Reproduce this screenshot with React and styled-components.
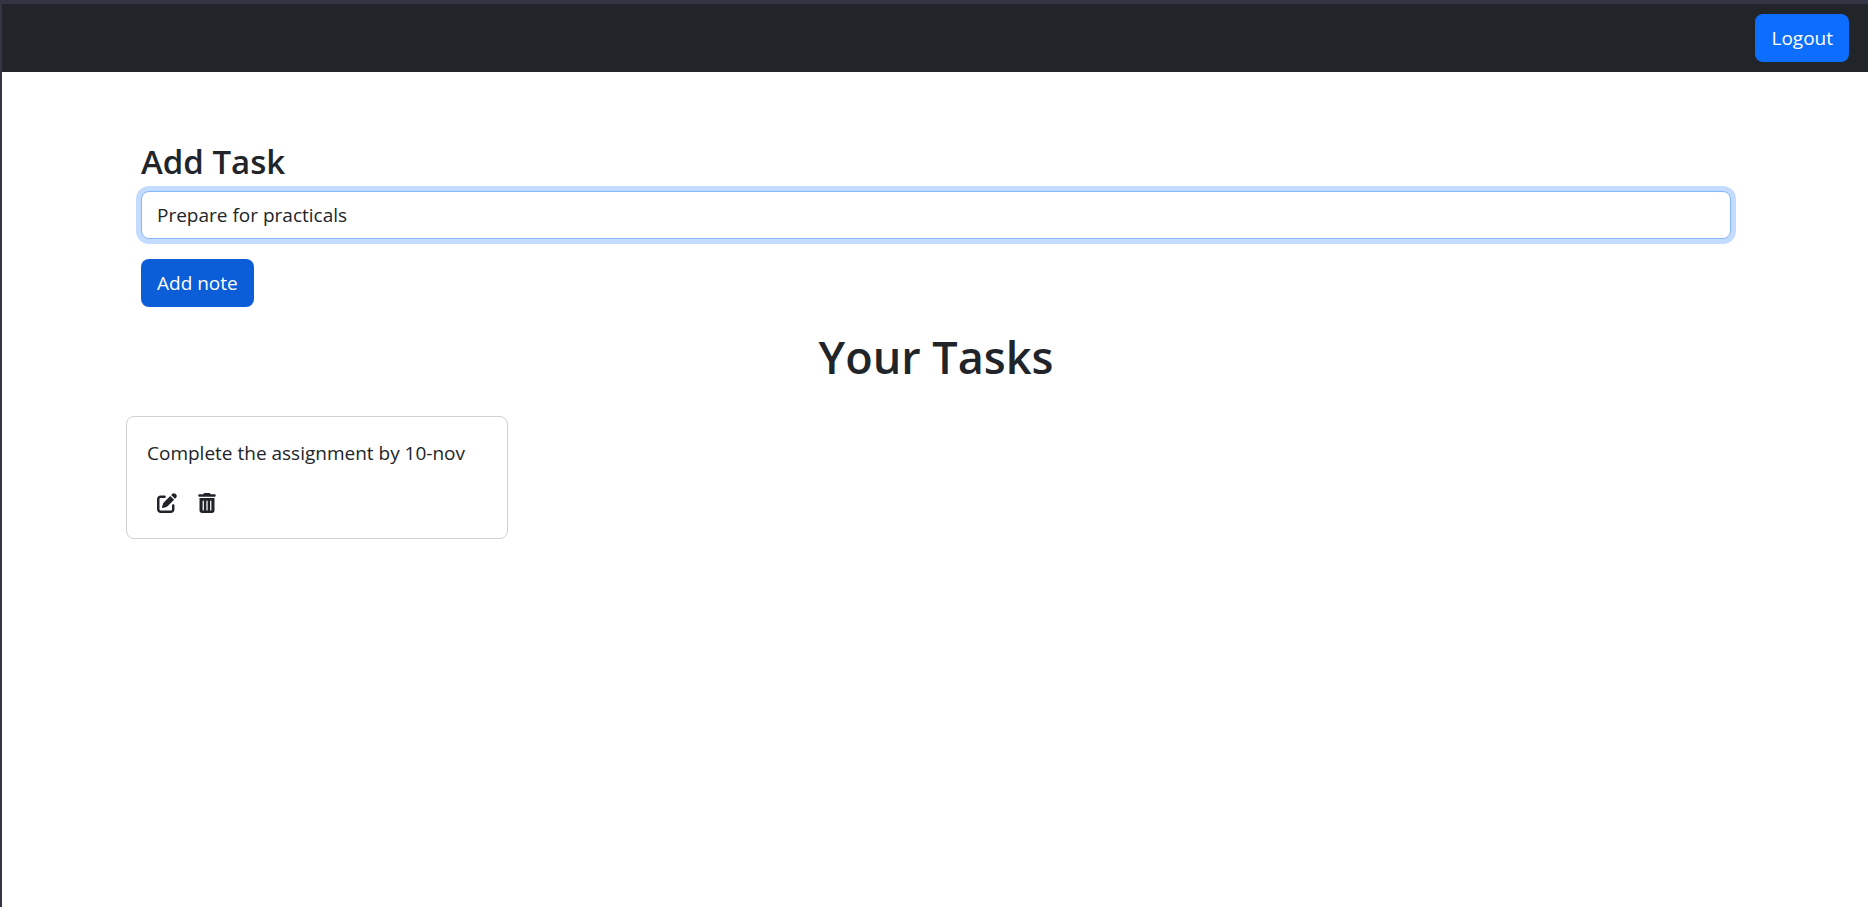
import React, { useState } from "react";
import styled, { createGlobalStyle } from "styled-components";
import { FaPenToSquare, FaTrashCan } from "react-icons/fa6";

const GlobalStyle = createGlobalStyle`
  *, *::before, *::after { box-sizing: border-box; }
  body {
    margin: 0;
    background: #fff;
    color: #212529;
    font-family: "Segoe UI", "Open Sans", "Noto Sans", sans-serif;
    font-size: 19px;
    line-height: 30px;
  }
`;

const Page = styled.div`
  min-height: 100vh;
  border-top: 4px solid #333544;
  border-left: 2px solid #333544;
`;

const Navbar = styled.nav`
  display: flex;
  justify-content: flex-end;
  padding: 10px 19px;
  background: #212529;
`;

const Button = styled.button`
  height: 48px;
  padding: 0 16px;
  border: 0;
  border-radius: 8px;
  background: ${(p) => (p.$pressed ? "#0b5ed7" : "#0d6efd")};
  color: #fff;
  font: inherit;
  cursor: pointer;
`;

const Container = styled.main`
  max-width: 1620px;
  margin: 0 auto;
  padding: 69px 14px 0 16px;
`;

const TaskForm = styled.form`
  display: flex;
  flex-direction: column;
  align-items: flex-start;
`;

const FormLabel = styled.label`
  margin-bottom: 8px;
  font-size: 33px;
  font-weight: 600;
  line-height: 42px;
`;

const TextInput = styled.input`
  width: 100%;
  height: 48px;
  margin-bottom: 20px;
  padding: 0 15px;
  border: 1px solid #86b7fe;
  border-radius: 8px;
  outline: 0;
  box-shadow: 0 0 0 5px #c2dbff;
  background: #fff;
  color: inherit;
  font: inherit;
`;

const Title = styled.h1`
  margin: 20px 0 29px;
  text-align: center;
  font-size: 45px;
  font-weight: 600;
  line-height: 60px;
`;

const TaskList = styled.div`
  display: grid;
  grid-template-columns: repeat(auto-fill, 382px);
  gap: 30px;
  margin: 0 -15px;
`;

const Card = styled.article`
  padding: 20px;
  border: 1px solid #d0d1d2;
  border-radius: 8px;
`;

const CardText = styled.p`
  margin: 0 0 20px;
  line-height: 32px;
`;

const CardActions = styled.div`
  display: flex;
  gap: 20px;
  padding: 4px 10px 5px;
`;

const IconButton = styled.button`
  display: flex;
  padding: 0;
  border: 0;
  background: none;
  color: inherit;
  font-size: 20px;
  cursor: pointer;

  svg { width: auto; height: 20px; }
`;

export default function App() {
  const [draft, setDraft] = useState("Prepare for practicals");
  const tasks = ["Complete the assignment by 10-nov"];

  return (
    <Page>
      <GlobalStyle />
      <Navbar>
        <Button type="button">Logout</Button>
      </Navbar>
      <Container>
        <TaskForm onSubmit={(e) => e.preventDefault()}>
          <FormLabel htmlFor="task">Add Task</FormLabel>
          <TextInput id="task" type="text" value={draft} onChange={(e) => setDraft(e.target.value)} />
          <Button type="submit" $pressed>Add note</Button>
        </TaskForm>
        <Title>Your Tasks</Title>
        <TaskList>
          {tasks.map((task) => (
            <Card key={task}>
              <CardText>{task}</CardText>
              <CardActions>
                <IconButton type="button" aria-label="Edit task"><FaPenToSquare /></IconButton>
                <IconButton type="button" aria-label="Delete task"><FaTrashCan /></IconButton>
              </CardActions>
            </Card>
          ))}
        </TaskList>
      </Container>
    </Page>
  );
}
